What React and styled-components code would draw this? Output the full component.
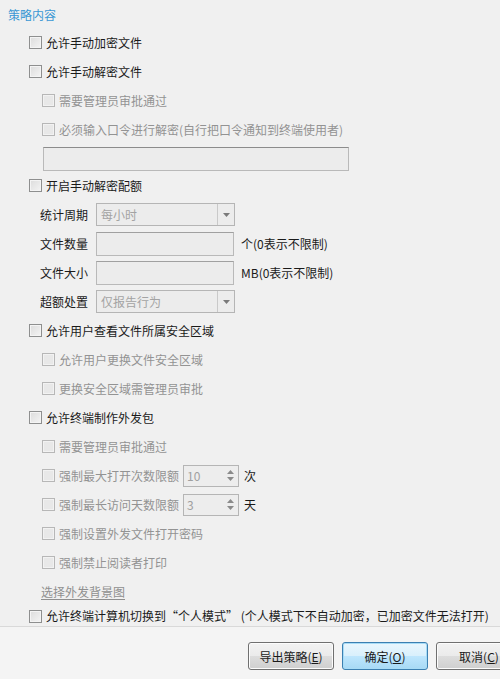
import React from "react";
import styled, { createGlobalStyle, css } from "styled-components";

const GlobalStyle = createGlobalStyle`
  html, body { margin: 0; padding: 0; background: #f0f0f0; }
  body {
    font-family: "Noto Sans CJK SC", "Microsoft YaHei", "Liberation Sans", sans-serif;
    font-size: 12px;
    color: #1a1a1a;
  }
`;

const Dialog = styled.div`
  width: 500px;
  height: 679px;
  display: flex;
  flex-direction: column;
  overflow: hidden;
  background: #f0f0f0;
`;

const Content = styled.div`
  height: 626px;
  display: flex;
  flex-direction: column;
`;

const Title = styled.div`
  height: 28px;
  display: flex;
  align-items: center;
  padding-left: 8px;
  color: #3a98d4;
  font-size: 12px;
`;

const Row = styled.div`
  height: ${(p) => p.$h || 29}px;
  display: flex;
  align-items: center;
  flex-shrink: 0;
  padding-left: ${(p) => (p.$level ? 42 : 29)}px;
  gap: 4px;
`;

const Box = styled.span`
  width: 13px;
  height: 13px;
  box-sizing: border-box;
  flex-shrink: 0;
  border: 1px solid ${(p) => (p.$disabled ? "#b7b7b7" : "#8e8f8f")};
  background: ${(p) =>
    p.$disabled
      ? "#e8e8e8"
      : "linear-gradient(135deg, #dcdcdc 0%, #f4f4f4 100%)"};
  box-shadow: inset 0 0 0 1px ${(p) => (p.$disabled ? "#f2f2f2" : "#f4f4f4")};
`;

const Text = styled.span`
  white-space: nowrap;
  color: ${(p) => (p.$disabled ? "#939393" : "#1a1a1a")};
  line-height: 16px;
`;

const FieldWrap = styled.div`
  height: 27px;
  flex-shrink: 0;
  padding: 3px 0 0 43px;
  box-sizing: border-box;
`;

const fieldBase = css`
  box-sizing: border-box;
  background: #ececec;
  border: 1px solid #b9b9b9;
  border-top-color: #8c8c8c;
`;

const WideField = styled.div`
  ${fieldBase};
  width: 306px;
  height: 24px;
`;

const FormRow = styled.div`
  height: 29px;
  flex-shrink: 0;
  display: flex;
  align-items: center;
  padding-left: 40px;
`;

const FieldLabel = styled.span`
  width: 56px;
  white-space: nowrap;
  color: #1a1a1a;
`;

const Input = styled.div`
  ${fieldBase};
  border-top-color: #a0a0a0;
  width: 138px;
  height: 24px;
`;

const Unit = styled.span`
  margin-left: 7px;
  white-space: nowrap;
  color: #1a1a1a;
`;

const Combo = styled.div`
  box-sizing: border-box;
  width: 139px;
  height: 23px;
  display: flex;
  align-items: stretch;
  background: #ececec;
  border: 1px solid #b5b5b5;
`;

const ComboText = styled.span`
  flex: 1;
  display: flex;
  align-items: center;
  padding-left: 4px;
  color: #a3a3a3;
`;

const ComboBtn = styled.span`
  width: 16px;
  border-left: 1px solid #c9c9c9;
  display: flex;
  align-items: center;
  justify-content: center;
`;

const Spin = styled.div`
  box-sizing: border-box;
  width: 56px;
  height: 22px;
  display: flex;
  border: 1px solid #b5b5b5;
  background: #ededed;
  margin-left: 0;
`;

const SpinValue = styled.span`
  flex: 1;
  display: flex;
  align-items: center;
  padding-left: 3px;
  color: #a0a0a0;
`;

const SpinBtns = styled.span`
  width: 16px;
  display: flex;
  flex-direction: column;
  align-items: center;
  justify-content: center;
  gap: 3px;
`;

const SpinUnit = styled.span`
  margin-left: 1px;
  color: #1a1a1a;
`;

const LinkRow = styled.div`
  height: 29px;
  flex-shrink: 0;
  display: flex;
  align-items: center;
  padding-left: 41px;
`;

const Link = styled.span`
  color: #8f8f8f;
  text-decoration: underline;
  text-underline-offset: 2px;
`;

const Footer = styled.div`
  flex: 1;
  border-top: 1px solid #d9d9d9;
  background: #f4f4f4;
  display: flex;
  gap: 8px;
  padding: 15px 0 0 248px;
  box-sizing: border-box;
  overflow: hidden;
`;

const Button = styled.div`
  box-sizing: border-box;
  flex-shrink: 0;
  width: 86px;
  height: 28px;
  border-radius: 3px;
  display: flex;
  align-items: center;
  justify-content: center;
  color: #1a1a1a;
  border: 1px solid ${(p) => (p.$primary ? "#3c7fb1" : "#707070")};
  background: ${(p) =>
    p.$primary
      ? "linear-gradient(#eaf6fd 0%, #d9f0fc 50%, #bee6fd 51%, #a7d9f5 100%)"
      : "linear-gradient(#f2f2f2 0%, #ebebeb 50%, #dddddd 51%, #cfcfcf 100%)"};
  box-shadow: inset 0 0 0 1px ${(p) => (p.$primary ? "#a8dcf6" : "#fcfcfc")};
`;

const U = styled.span`
  text-decoration: underline;
`;

const Arrow = ({ up, color = "#6b6b6b" }) => (
  <svg width="7" height="4" viewBox="0 0 7 4">
    <path d={up ? "M0 4 L3.5 0 L7 4 Z" : "M0 0 L7 0 L3.5 4 Z"} fill={color} />
  </svg>
);

const Check = ({ level, disabled, children, h }) => (
  <Row $level={level} $h={h}>
    <Box $disabled={disabled} />
    <Text $disabled={disabled}>{children}</Text>
  </Row>
);

const SelectBox = ({ value }) => (
  <Combo>
    <ComboText>{value}</ComboText>
    <ComboBtn>
      <Arrow color="#7a7a7a" />
    </ComboBtn>
  </Combo>
);

const SpinRow = ({ label, value, unit }) => (
  <Row $level={1}>
    <Box $disabled />
    <Text $disabled>{label}</Text>
    <Spin>
      <SpinValue>{value}</SpinValue>
      <SpinBtns>
        <Arrow up color="#8a8a8a" />
        <Arrow color="#8a8a8a" />
      </SpinBtns>
    </Spin>
    <SpinUnit>{unit}</SpinUnit>
  </Row>
);

export default function App() {
  return (
    <>
      <GlobalStyle />
      <Dialog>
        <Content>
          <Title>策略内容</Title>
          <Check>允许手动加密文件</Check>
          <Check>允许手动解密文件</Check>
          <Check level={1} disabled>需要管理员审批通过</Check>
          <Check level={1} disabled>必须输入口令进行解密(自行把口令通知到终端使用者)</Check>
          <FieldWrap>
            <WideField />
          </FieldWrap>
          <Check>开启手动解密配额</Check>
          <FormRow>
            <FieldLabel>统计周期</FieldLabel>
            <SelectBox value="每小时" />
          </FormRow>
          <FormRow>
            <FieldLabel>文件数量</FieldLabel>
            <Input />
            <Unit>个(0表示不限制)</Unit>
          </FormRow>
          <FormRow>
            <FieldLabel>文件大小</FieldLabel>
            <Input />
            <Unit>MB(0表示不限制)</Unit>
          </FormRow>
          <FormRow>
            <FieldLabel>超额处置</FieldLabel>
            <SelectBox value="仅报告行为" />
          </FormRow>
          <Check>允许用户查看文件所属安全区域</Check>
          <Check level={1} disabled>允许用户更换文件安全区域</Check>
          <Check level={1} disabled>更换安全区域需管理员审批</Check>
          <Check>允许终端制作外发包</Check>
          <Check level={1} disabled>需要管理员审批通过</Check>
          <SpinRow label="强制最大打开次数限额" value="10" unit="次" />
          <SpinRow label="强制最长访问天数限额" value="3" unit="天" />
          <Check level={1} disabled>强制设置外发文件打开密码</Check>
          <Check level={1} disabled>强制禁止阅读者打印</Check>
          <LinkRow>
            <Link>选择外发背景图</Link>
          </LinkRow>
          <Check h={20}>允许终端计算机切换到“个人模式” (个人模式下不自动加密，已加密文件无法打开)</Check>
        </Content>
        <Footer>
          <Button>
            导出策略(<U>E</U>)
          </Button>
          <Button $primary>
            确定(<U>O</U>)
          </Button>
          <Button>
            取消(<U>C</U>)
          </Button>
        </Footer>
      </Dialog>
    </>
  );
}
